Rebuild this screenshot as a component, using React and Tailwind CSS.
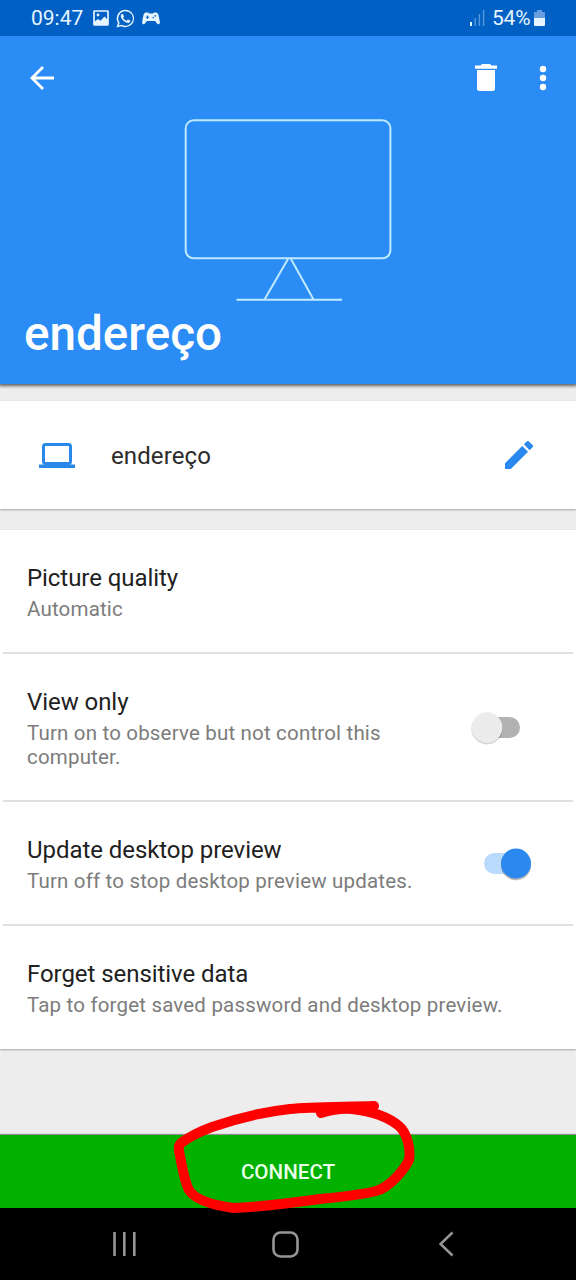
import React from "react";

function StatusBar() {
  return (
    <div className="z-20 flex h-9 shrink-0 items-center bg-[#0060c4] pl-[31px] pr-[31px] text-[#e6f4ff]">
      <span className="w-[62px] text-[21px] leading-6">09:47</span>
      <svg className="h-4 w-4" viewBox="0 0 16 16" fill="none">
        <rect x="1" y="1" width="14" height="14" rx="0.6" stroke="currentColor" strokeWidth="1.7" />
        <circle cx="5" cy="5" r="1.4" fill="currentColor" />
        <path d="M1 12l4-3 2.5 1.8L11.500 6.500 15 10v5H1z" fill="currentColor" />
      </svg>
      <svg className="ml-[7px] h-[19px] w-[19px]" viewBox="0 0 24 24" fill="currentColor">
        <path d="M17.472 14.382c-.297-.149-1.758-.867-2.030-.967-.273-.099-.471-.148-.670.150-.197.297-.767.966-.940 1.164-.173.199-.347.223-.644.075-.297-.150-1.255-.463-2.390-1.475-.883-.788-1.480-1.761-1.653-2.059-.173-.297-.018-.458.130-.606.134-.133.298-.347.446-.520.149-.174.198-.298.298-.497.099-.198.050-.371-.025-.520-.075-.149-.669-1.612-.916-2.207-.242-.579-.487-.5-.669-.510-.173-.008-.371-.010-.570-.010-.198 0-.520.074-.792.372-.272.297-1.040 1.016-1.040 2.479 0 1.462 1.065 2.875 1.213 3.074.149.198 2.096 3.200 5.077 4.487.709.306 1.262.489 1.694.625.712.227 1.360.195 1.871.118.571-.085 1.758-.719 2.006-1.413.248-.694.248-1.289.173-1.413-.074-.124-.272-.198-.570-.347M12 .9A11 11 0 0 0 2.500 17.500L.6 23.500l6.200-1.800A11 11 0 1 0 12 .9m0 1.900a9.200 9.200 0 1 1-4.800 17l-3.700 1.100 1.100-3.600A9.200 9.200 0 0 1 12 2.800" fillRule="evenodd" />
      </svg>
      <svg className="ml-[7px] h-[13px] w-[18px]" viewBox="0 0 18 13">
        <path d="M4 .5h2l1.200 1h3.600l1.200-1h2c1.200 0 2.100 1 2.500 2.400l1.300 6.500c.3 1.900-.4 2.900-1.300 2.900-1.200 0-2.200-1.200-3.300-3.200H4.800C3.700 11.100 2.700 12.300 1.500 12.300.6 12.300-.1 11.300.2 9.400l1.300-6.500C1.900 1.500 2.800.5 4 .5z" fill="currentColor" />
        <path d="M5.500 3.500v3.400M3.800 5.200h3.400" stroke="#0060c4" strokeWidth="1" />
        <circle cx="11.300" cy="5.600" r=".8" fill="#0060c4" />
        <circle cx="13.300" cy="3.900" r=".8" fill="#0060c4" />
      </svg>
      <svg className="ml-auto h-4 w-[15px]" viewBox="0 0 15 16" fill="none" strokeWidth="1.5">
        <path d="M1 12v4" stroke="currentColor" strokeWidth="2" />
        <path d="M5.200 8v8M9.400 4v12M13.600 0v16" stroke="#5596da" />
      </svg>
      <span className="ml-[7px] w-[42px] whitespace-nowrap text-[21px] leading-6 tracking-[-0.2px]">54%</span>
      <svg className="h-[17px] w-[11px]" viewBox="0 0 11 17">
        <path d="M3 0h5v2h2q1 0 1 1v6H0V3q0-1 1-1h2z" fill="#669edf" />
        <path d="M0 8h11v7q0 1-1 1H1q-1 0-1-1z" fill="currentColor" />
      </svg>
    </div>
  );
}

function Header() {
  return (
    <header className="z-10 flex h-[348px] shrink-0 flex-col bg-[#2a8cf4] text-white shadow-[0_1px_3px_1px_rgba(0,0,0,0.6)]">
      <div className="flex h-[83px] shrink-0 items-center pl-[30px] pr-[29px]">
        <svg className="h-6 w-6" viewBox="0 0 24 24" fill="none" stroke="currentColor" strokeWidth="2.8">
          <path d="M13 1L2 12l11 11M2 12h22" />
        </svg>
        <svg className="ml-auto h-[27px] w-[22px]" viewBox="0 0 22 27" fill="currentColor">
          <path d="M0 1.500h5.500L7 0h8l1.500 1.500H22v3.200H0zM2 6h18v18.500q0 2.500-2.500 2.500h-13Q2 27 2 24.500z" />
        </svg>
        <svg className="ml-[42px] h-[26px] w-2" viewBox="0 0 8 26" fill="currentColor">
          <circle cx="4" cy="4" r="3.200" />
          <circle cx="4" cy="13" r="3.200" />
          <circle cx="4" cy="22" r="3.200" />
        </svg>
      </div>
      <svg className="ml-[184px] h-[183px] w-[208px] shrink-0" viewBox="0 0 208 183" fill="none" stroke="#bfeaff" strokeWidth="2">
        <rect x="1.700" y="1.300" width="204.700" height="138" rx="8" />
        <path d="M80.500 180.500L104 140M107 140l22.500 40.500M52.500 180.800h105.500" />
      </svg>
      <h1 className="ml-6 mt-1 text-[47.6px] font-medium leading-[56px]">endereço</h1>
    </header>
  );
}

function Switch({ on }) {
  return on ? (
    <svg className="mr-[42px] h-10 w-[52px] shrink-0" viewBox="0 0 52 40">
      <rect x="2" y="9" width="44" height="21" rx="10.500" fill="#b9dafb" />
      <circle cx="34" cy="21.500" r="15" fill="#000" opacity=".14" />
      <circle cx="34" cy="21" r="15" fill="#000" opacity=".18" />
      <circle cx="34" cy="19.500" r="15" fill="#2a88ee" />
    </svg>
  ) : (
    <svg className="mr-[54px] h-10 w-[52px] shrink-0" viewBox="0 0 52 40">
      <rect x="6" y="9" width="44" height="21" rx="10.500" fill="#b2b2b2" />
      <circle cx="17" cy="20.800" r="15.600" fill="#000" opacity=".16" />
      <circle cx="17" cy="19.500" r="15.300" fill="#ececec" />
    </svg>
  );
}

function Setting({ title, children, toggle, last }) {
  return (
    <div className="flex flex-col">
      <div className="flex items-center pb-[31px] pl-[27px] pt-[33px]">
        <div className="flex-1">
          <div className="text-[24px] leading-[30px] tracking-[-0.06px] text-[#212121]">{title}</div>
          <div className="mt-1 whitespace-nowrap text-[20.5px] leading-6 tracking-[0.18px] text-[#7c7c7c]">{children}</div>
        </div>
        {toggle !== undefined && <Switch on={toggle} />}
      </div>
      <div className={last ? "h-0" : "mx-[3px] h-0.5 bg-[#dfdfdf]"} />
    </div>
  );
}

function NavBar() {
  return (
    <nav className="flex h-[72px] shrink-0 items-center bg-black pl-[112px] pr-[121px] text-[#969696]">
      <svg className="h-[26px] w-6" viewBox="0 0 24 26" stroke="currentColor" strokeWidth="2.600">
        <path d="M2.500 1v24M12.300 1v24M22.300 1v24" />
      </svg>
      <svg className="ml-[136px] h-[27px] w-[27px]" viewBox="0 0 27 27" fill="none" stroke="currentColor" strokeWidth="2.600">
        <rect x="1.500" y="1.500" width="24" height="24" rx="7" />
      </svg>
      <svg className="ml-auto h-[26px] w-4" viewBox="0 0 16 26" fill="none" stroke="currentColor" strokeWidth="2.500">
        <path d="M13.500 1.500L1.500 13l12 11.500" />
      </svg>
    </nav>
  );
}

export default function App() {
  return (
    <div className="relative flex h-[1280px] w-[576px] flex-col overflow-hidden bg-[#ededed] font-[Roboto,sans-serif]">
      <StatusBar />
      <Header />
      <section className="mt-[17px] flex h-[108px] shrink-0 items-center bg-white pl-[39px] pr-[43px] shadow-[0_1px_2px_rgba(0,0,0,0.3)]">
        <svg className="h-[25px] w-9" viewBox="0 0 36 25">
          <rect x="4.500" y="1.500" width="27" height="19" rx="2" fill="none" stroke="#2a88e8" strokeWidth="3" />
          <path d="M0 21.500h36V25H0z" fill="#2a88e8" />
        </svg>
        <span className="ml-9 pt-0.5 text-[24px] leading-8 tracking-[0.1px] text-[#2b2b2b]">endereço</span>
        <svg className="ml-auto h-[28px] w-[28px]" viewBox="3 3 18 18" fill="#2a88ee">
          <path d="M3 17.250V21h3.750L17.810 9.940l-3.750-3.750L3 17.250zM20.710 7.040a1 1 0 0 0 0-1.410l-2.340-2.340a1 1 0 0 0-1.410 0l-1.830 1.830 3.750 3.750 1.830-1.830z" />
        </svg>
      </section>
      <main className="mt-[21px] h-[519px] shrink-0 bg-white shadow-[0_1px_2px_rgba(0,0,0,0.3)]">
        <Setting title="Picture quality">Automatic</Setting>
        <Setting title="View only" toggle={false}>
          Turn on to observe but not control this
          <br />
          computer.
        </Setting>
        <Setting title="Update desktop preview" toggle={true}>
          Turn off to stop desktop preview updates.
        </Setting>
        <Setting title="Forget sensitive data" last>
          Tap to forget saved password and desktop preview.
        </Setting>
      </main>
      <button className="mt-auto h-[73px] shrink-0 bg-[#00b100] pt-0.5 text-[20.6px] font-medium text-[#e9ffe9] shadow-[0_-1px_1px_rgba(0,0,0,0.4)]">
        CONNECT
      </button>
      <NavBar />
      <svg className="pointer-events-none absolute left-[170px] top-[1098px] h-[118px] w-[250px]" viewBox="170 1098 250 118" fill="none" stroke="#ff0000" strokeWidth="10" strokeLinecap="round" strokeLinejoin="round">
        <path d="M374 1106C345 1107 310 1107 290 1109C262 1112 235 1119 212 1127Q193 1134 181 1143Q178 1146 179 1151C182 1165 184 1181 189 1190C195 1200 212 1205 233 1208C262 1207 291 1203 320 1199C340 1197 361 1195 376 1191C391 1187 405 1168 409 1160C411 1149 407 1133 399 1126C387 1116 370 1111 352 1109Q337 1108 321 1113" />
      </svg>
    </div>
  );
}
